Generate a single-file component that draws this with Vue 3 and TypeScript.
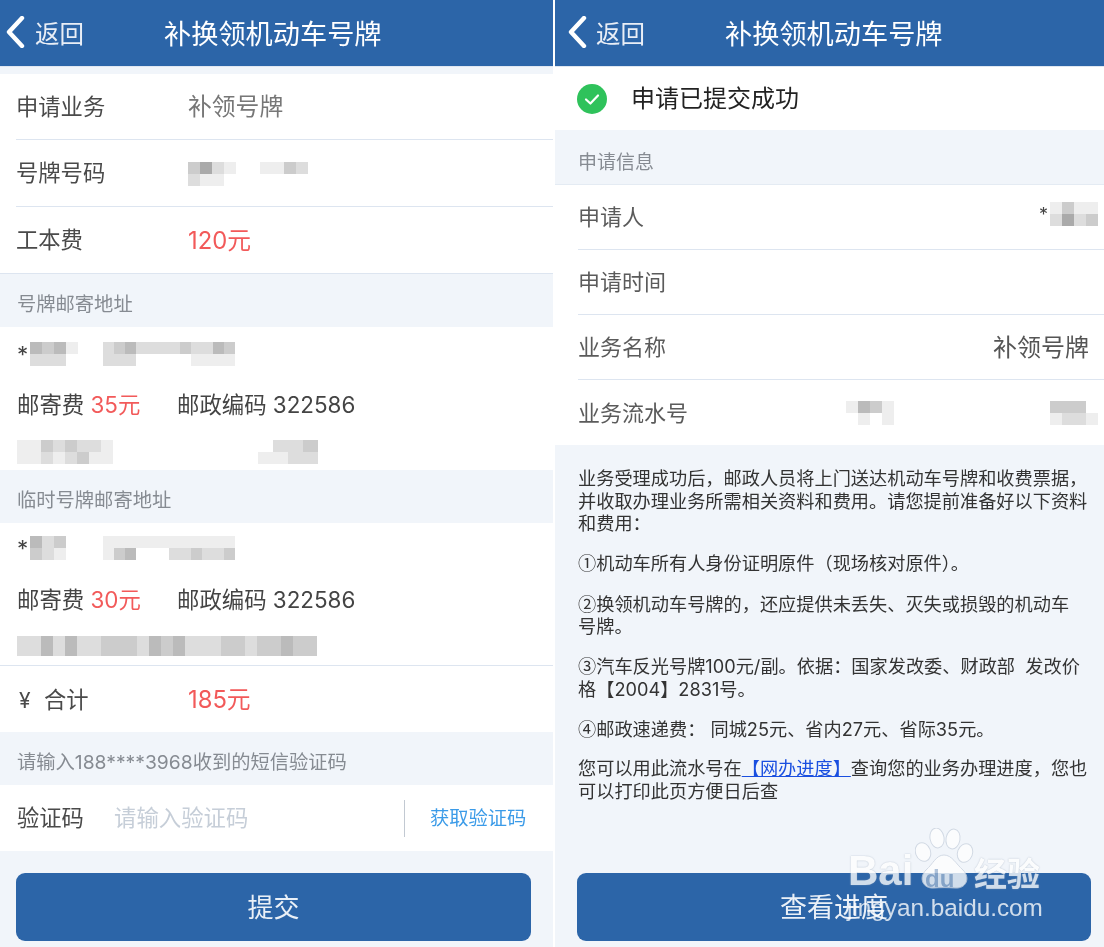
<script setup lang="ts">
interface Mosaic {
  cols: number
  cells: string[]
}

interface Note {
  mark: string
  lines: string[]
}

function mosaic(...rows: string[]): Mosaic {
  return { cols: rows[0].length, cells: rows.join('').split('') }
}

function grey(c: string): string {
  return `#${c}${c}${c}`
}

const plate = mosaic('cadeffeecd', 'deefffffff')
const addr1Name = mosaic('bcbe', 'dddf')
const addr1Phone = mosaic('dcbddddcddbc', 'dddfffffeeee')
const addr1LineA = mosaic('eecdcdde', 'eededcee')
const addr1LineB = mosaic('fddc', 'eedd')
const addr2Name = mosaic('bdc', 'cde')
const addr2Phone = mosaic('eeeeeeeeeeee', 'ecbfffddcddc')
const addr2Line = mosaic('ddbdbddcccdbcbdddccdccbcc')
const applicant = mosaic('ecee', 'dadc')
const serialA = mosaic('ebce', 'fefe')
const serialB = mosaic('cccf', 'edde')

const intro: string[] = [
  '业务受理成功后，邮政人员将上门送达机动车号牌和收费票据，',
  '并收取办理业务所需相关资料和费用。请您提前准备好以下资料',
  '和费用：',
]

const notes: Note[] = [
  { mark: '①', lines: ['机动车所有人身份证明原件（现场核对原件）。'] },
  { mark: '②', lines: ['换领机动车号牌的，还应提供未丢失、灭失或损毁的机动车', '号牌。'] },
  { mark: '③', lines: ['汽车反光号牌100元/副。依据：国家发改委、财政部  发改价', '格【2004】2831号。'] },
  { mark: '④', lines: ['邮政速递费： 同城25元、省内27元、省际35元。'] },
]
</script>

<template>
  <div class="page">
    <section class="panel left">
      <header class="bar">
        <svg class="chev" viewBox="0 0 20 32" width="20" height="32">
          <path d="M17 2 L4 16 L17 30" fill="none" stroke="#fff" stroke-width="4.4" stroke-linecap="round" stroke-linejoin="round" />
        </svg>
        <span class="back">返回</span>
        <h1 class="title">补换领机动车号牌</h1>
      </header>
      <div class="spacer"></div>

      <div class="card bordered">
        <div class="row">
          <span class="label">申请业务</span>
          <span class="value muted">补领号牌</span>
        </div>
        <div class="row">
          <span class="label">号牌号码</span>
          <span class="mos plate" :style="{ gridTemplateColumns: `repeat(${plate.cols}, 12px)` }">
            <i v-for="(c, i) in plate.cells" :key="i" :style="{ background: grey(c) }"></i>
          </span>
        </div>
        <div class="row plain">
          <span class="label">工本费</span>
          <span class="value red">120元</span>
        </div>
      </div>

      <div class="section">号牌邮寄地址</div>
      <div class="addr a1">
        <div class="who">
          <span>*</span>
          <span class="mos" :style="{ gridTemplateColumns: `repeat(${addr1Name.cols}, 12px)` }">
            <i v-for="(c, i) in addr1Name.cells" :key="i" :style="{ background: grey(c) }"></i>
          </span>
          <span class="mos" :style="{ gridTemplateColumns: `repeat(${addr1Phone.cols}, 11px)` }">
            <i v-for="(c, i) in addr1Phone.cells" :key="i" :style="{ background: grey(c) }"></i>
          </span>
        </div>
        <div class="fee">
          <span>邮寄费 <b class="red">35元</b></span>
          <span>邮政编码 322586</span>
        </div>
        <div class="where">
          <span class="mos" :style="{ gridTemplateColumns: `repeat(${addr1LineA.cols}, 12px)` }">
            <i v-for="(c, i) in addr1LineA.cells" :key="i" :style="{ background: grey(c) }"></i>
          </span>
          <span class="mos" :style="{ gridTemplateColumns: `repeat(${addr1LineB.cols}, 15px)` }">
            <i v-for="(c, i) in addr1LineB.cells" :key="i" :style="{ background: grey(c) }"></i>
          </span>
        </div>
      </div>

      <div class="section">临时号牌邮寄地址</div>
      <div class="addr a2">
        <div class="who">
          <span>*</span>
          <span class="mos" :style="{ gridTemplateColumns: `repeat(${addr2Name.cols}, 12px)` }">
            <i v-for="(c, i) in addr2Name.cells" :key="i" :style="{ background: grey(c) }"></i>
          </span>
          <span class="mos" :style="{ gridTemplateColumns: `repeat(${addr2Phone.cols}, 11px)` }">
            <i v-for="(c, i) in addr2Phone.cells" :key="i" :style="{ background: grey(c) }"></i>
          </span>
        </div>
        <div class="fee">
          <span>邮寄费 <b class="red">30元</b></span>
          <span>邮政编码 322586</span>
        </div>
        <div class="where">
          <span class="mos single" :style="{ gridTemplateColumns: `repeat(${addr2Line.cols}, 12px)` }">
            <i v-for="(c, i) in addr2Line.cells" :key="i" :style="{ background: grey(c) }"></i>
          </span>
        </div>
      </div>

      <div class="card">
        <div class="row total">
          <span class="label"><em class="yen">¥</em>合计</span>
          <span class="value red">185元</span>
        </div>
      </div>

      <div class="section">请输入188****3968收到的短信验证码</div>
      <div class="code">
        <span class="code-label">验证码</span>
        <span class="placeholder">请输入验证码</span>
        <a class="get">获取验证码</a>
      </div>
      <div class="action">
        <button class="btn btn-submit" type="button">提交</button>
      </div>
    </section>

    <section class="panel right">
      <header class="bar">
        <svg class="chev" viewBox="0 0 20 32" width="20" height="32">
          <path d="M17 2 L4 16 L17 30" fill="none" stroke="#fff" stroke-width="4.4" stroke-linecap="round" stroke-linejoin="round" />
        </svg>
        <span class="back">返回</span>
        <h1 class="title">补换领机动车号牌</h1>
      </header>

      <div class="done">
        <svg viewBox="0 0 30 30" width="30" height="30">
          <circle cx="15" cy="15" r="15" fill="#2fc25b" />
          <path d="M9 15.5 L13.4 19.5 L21 11.5" fill="none" stroke="#fff" stroke-width="2.2" stroke-linecap="round" stroke-linejoin="round" />
        </svg>
        <span class="done-text">申请已提交成功</span>
      </div>

      <div class="section info">申请信息</div>

      <div class="card">
        <div class="row r">
          <span class="label">申请人</span>
          <span class="end applicant">
            <span class="star">*</span>
            <span class="mos" :style="{ gridTemplateColumns: `repeat(${applicant.cols}, 12px)` }">
              <i v-for="(c, i) in applicant.cells" :key="i" :style="{ background: grey(c) }"></i>
            </span>
          </span>
        </div>
        <div class="row r">
          <span class="label">申请时间</span>
        </div>
        <div class="row r">
          <span class="label">业务名称</span>
          <span class="end biz">补领号牌</span>
        </div>
        <div class="row r last">
          <span class="label">业务流水号</span>
          <span class="serial">
            <span class="mos" :style="{ gridTemplateColumns: `repeat(${serialA.cols}, 12px)` }">
              <i v-for="(c, i) in serialA.cells" :key="i" :style="{ background: grey(c) }"></i>
            </span>
            <span class="mos" :style="{ gridTemplateColumns: `repeat(${serialB.cols}, 12px)` }">
              <i v-for="(c, i) in serialB.cells" :key="i" :style="{ background: grey(c) }"></i>
            </span>
          </span>
        </div>
      </div>

      <div class="notes">
        <p>
          <template v-for="(line, j) in intro" :key="j">{{ line }}<br /></template>
        </p>
        <p v-for="note in notes" :key="note.mark">
          <span class="mark">{{ note.mark }}</span>
          <template v-for="(line, j) in note.lines" :key="j">{{ line }}<br /></template>
        </p>
        <p>您可以用此流水号在<a class="link">【网办进度】</a>查询您的业务办理进度，您也<br />可以打印此页方便日后查</p>
      </div>

      <div class="action">
        <button class="btn btn-view" type="button">查看进度</button>
      </div>
    </section>

    <div class="watermark">
      <svg class="paw" viewBox="0 0 60 62" width="60" height="62">
        <g fill="#fff" stroke="#c9d2de" stroke-width="1">
          <ellipse cx="8" cy="24" rx="7.5" ry="9.5" transform="rotate(-20 8 24)" />
          <ellipse cx="22" cy="10" rx="7" ry="10" transform="rotate(-10 22 10)" />
          <ellipse cx="38" cy="11" rx="7" ry="10" transform="rotate(10 38 11)" />
          <ellipse cx="50" cy="25" rx="7.5" ry="9.5" transform="rotate(20 50 25)" />
          <path d="M29 27 C21 27 18 36 11 42 C3 50 8 61 19 60 C25 59.5 33 59.5 40 60 C51 61 56 50 48 42 C41 36 37 27 29 27 Z" />
        </g>
      </svg>
      <span class="wm-bai">Bai</span>
      <span class="wm-du">du</span>
      <span class="wm-cn">经验</span>
      <span class="wm-url">jingyan.baidu.com</span>
    </div>
  </div>
</template>

<style>
html,
body {
  margin: 0;
  background: #fff;
}
</style>

<style scoped>
.page {
  position: relative;
  display: flex;
  gap: 2px;
  width: 1104px;
  height: 947px;
  overflow: hidden;
  background: #fff;
  filter: blur(0.4px);
  font-family: "Inter", "Noto Sans CJK SC", sans-serif;
  color: #444;
}
.panel {
  display: flex;
  flex-direction: column;
  height: 947px;
  background: #f1f5fa;
}
.left {
  width: 553px;
}
.right {
  width: 549px;
}
.bar {
  flex: none;
  display: flex;
  align-items: center;
  height: 67px;
  padding: 0 0 2px 5px;
  box-sizing: border-box;
  background: #2c65a8;
  color: #fff;
  border-bottom: 1px solid #dfe7f1;
}
.right .bar {
  padding-left: 12px;
}
.chev {
  flex: none;
}
.back {
  margin-left: 10px;
  font-size: 24.5px;
  color: #e9eef6;
}
.right .back {
  margin-left: 9px;
}
.title {
  margin: 0 0 0 80px;
  font-size: 27.2px;
  font-weight: 400;
  white-space: nowrap;
}
.spacer {
  flex: none;
  height: 7px;
}
.card {
  flex: none;
  background: #fff;
}
.card.bordered {
  border-bottom: 1px solid #dde5f0;
}
.row {
  display: flex;
  align-items: center;
  height: 67px;
  margin-left: 16px;
  padding-bottom: 4px;
  box-sizing: border-box;
  border-bottom: 1px solid #dde5f0;
}
.row:first-child {
  height: 66px;
}
.row.plain {
  height: 66px;
  border-bottom: none;
}
.row.total {
  height: 66px;
  padding-bottom: 3px;
  border-bottom: none;
}
.label {
  flex: none;
  width: 172px;
  font-size: 22.3px;
  color: #4a4a4a;
  white-space: nowrap;
}
.value {
  font-size: 23.8px;
}
.muted {
  color: #777;
}
.red {
  color: #f25a5a;
  font-weight: 400;
}
.mos {
  display: inline-grid;
  grid-auto-rows: 12px;
  filter: blur(0.6px);
}
.mos.plate {
  margin-top: 6px;
}
.mos.single {
  grid-auto-rows: 20px;
}
.section {
  flex: none;
  display: flex;
  align-items: center;
  height: 53px;
  padding: 4px 0 0 17px;
  font-size: 19.3px;
  color: #868b92;
  box-sizing: border-box;
}
.addr {
  flex: none;
  display: grid;
  padding-left: 17px;
  background: #fff;
  font-size: 22.4px;
}
.a1 {
  grid-template-rows: 54px 48px 41px;
}
.a1 .where {
  padding-top: 5px;
}
.a2 {
  grid-template-rows: 50px 54px 38px;
  border-bottom: 1px solid #dde5f0;
}
.who {
  display: grid;
  grid-template-columns: 13px 73px auto;
  justify-content: start;
  align-items: center;
}
.fee {
  display: grid;
  grid-template-columns: 160px auto;
  justify-content: start;
  align-items: center;
  padding-bottom: 4px;
  color: #444;
}
.where {
  display: grid;
  grid-template-columns: 241px auto;
  justify-content: start;
  align-items: center;
}
.where .single {
  grid-column: 1 / -1;
}
.yen {
  display: inline-block;
  width: 28px;
  padding-left: 3px;
  box-sizing: border-box;
  font-style: normal;
  font-size: 21px;
}
.code {
  flex: none;
  display: flex;
  align-items: center;
  height: 66px;
  padding-left: 17px;
  box-sizing: border-box;
  background: #fff;
}
.code-label {
  width: 97px;
  padding-bottom: 4px;
  font-size: 22.3px;
  color: #4a4a4a;
}
.placeholder {
  flex: 1;
  padding-bottom: 4px;
  font-size: 22.4px;
  color: #c6ced8;
}
.get {
  width: 149px;
  height: 37px;
  line-height: 36px;
  padding-left: 25px;
  box-sizing: border-box;
  font-size: 19.3px;
  color: #3b9be8;
  border-left: 1px solid #c2c9d2;
}
.action {
  flex: none;
  padding: 22px 0 0 16px;
}
.right .action {
  padding: 0 0 6px 22px;
}
.btn {
  display: block;
  height: 68px;
  padding: 0 0 3px;
  border: none;
  border-radius: 9px;
  background: #2c65a8;
  color: #eaf0f7;
  font: inherit;
}
.btn-submit {
  width: 515px;
  font-size: 26px;
}
.btn-view {
  width: 514px;
  font-size: 27px;
}
.done {
  flex: none;
  display: flex;
  align-items: center;
  gap: 24px;
  height: 63px;
  padding-left: 22px;
  background: #fff;
  font-size: 24px;
  color: #222;
}
.done-text {
  padding-bottom: 4px;
}
.section.info {
  height: 55px;
  padding: 6px 0 0 23px;
  font-size: 19px;
  border-bottom: 1px solid #e4ebf3;
}
.row.r {
  margin-left: 23px;
  height: 65px;
  justify-content: space-between;
  padding-right: 6px;
}
.row.r.last {
  border-bottom: none;
}
.row.r .label {
  width: auto;
  font-size: 22px;
  color: #5b5b5b;
}
.end {
  display: flex;
  align-items: center;
}
.applicant {
  margin-bottom: 2px;
}
.star {
  font-size: 18px;
  margin-right: 2px;
}
.biz {
  font-size: 24px;
  margin-right: 9px;
  color: #555;
}
.serial {
  display: flex;
  gap: 156px;
  margin-top: 4px;
}
.notes {
  flex: 1;
  padding: 22px 0 0 23px;
  font-size: 18.2px;
  line-height: 22.5px;
  color: #333;
  white-space: pre;
}
.notes p {
  margin: 0 0 16.8px;
}
.mark {
  font-family: "Noto Sans CJK SC", sans-serif;
}
.link {
  color: #1a4fe0;
  text-decoration: underline;
}
.watermark {
  position: absolute;
  left: 848px;
  top: 828px;
  width: 200px;
  height: 100px;
  color: #fff;
  opacity: 0.78;
}
.paw {
  position: absolute;
  left: 67px;
  top: 0;
}
.wm-bai,
.wm-cn {
  text-shadow: 0 0 1.5px #9aa8ba;
}
.wm-bai {
  position: absolute;
  left: 0;
  top: 19px;
  font-family: "Liberation Sans", sans-serif;
  font-weight: 700;
  font-size: 42px;
}
.wm-du {
  position: absolute;
  left: 77px;
  top: 37px;
  font-family: "Liberation Sans", sans-serif;
  font-weight: 700;
  font-size: 24px;
  color: #9fb6d2;
}
.wm-cn {
  position: absolute;
  left: 126px;
  top: 20px;
  font-size: 33px;
  font-weight: 700;
  white-space: nowrap;
}
.wm-url {
  position: absolute;
  left: -1px;
  top: 66px;
  font-family: "Liberation Sans", sans-serif;
  font-size: 24.3px;
  white-space: nowrap;
}
</style>
